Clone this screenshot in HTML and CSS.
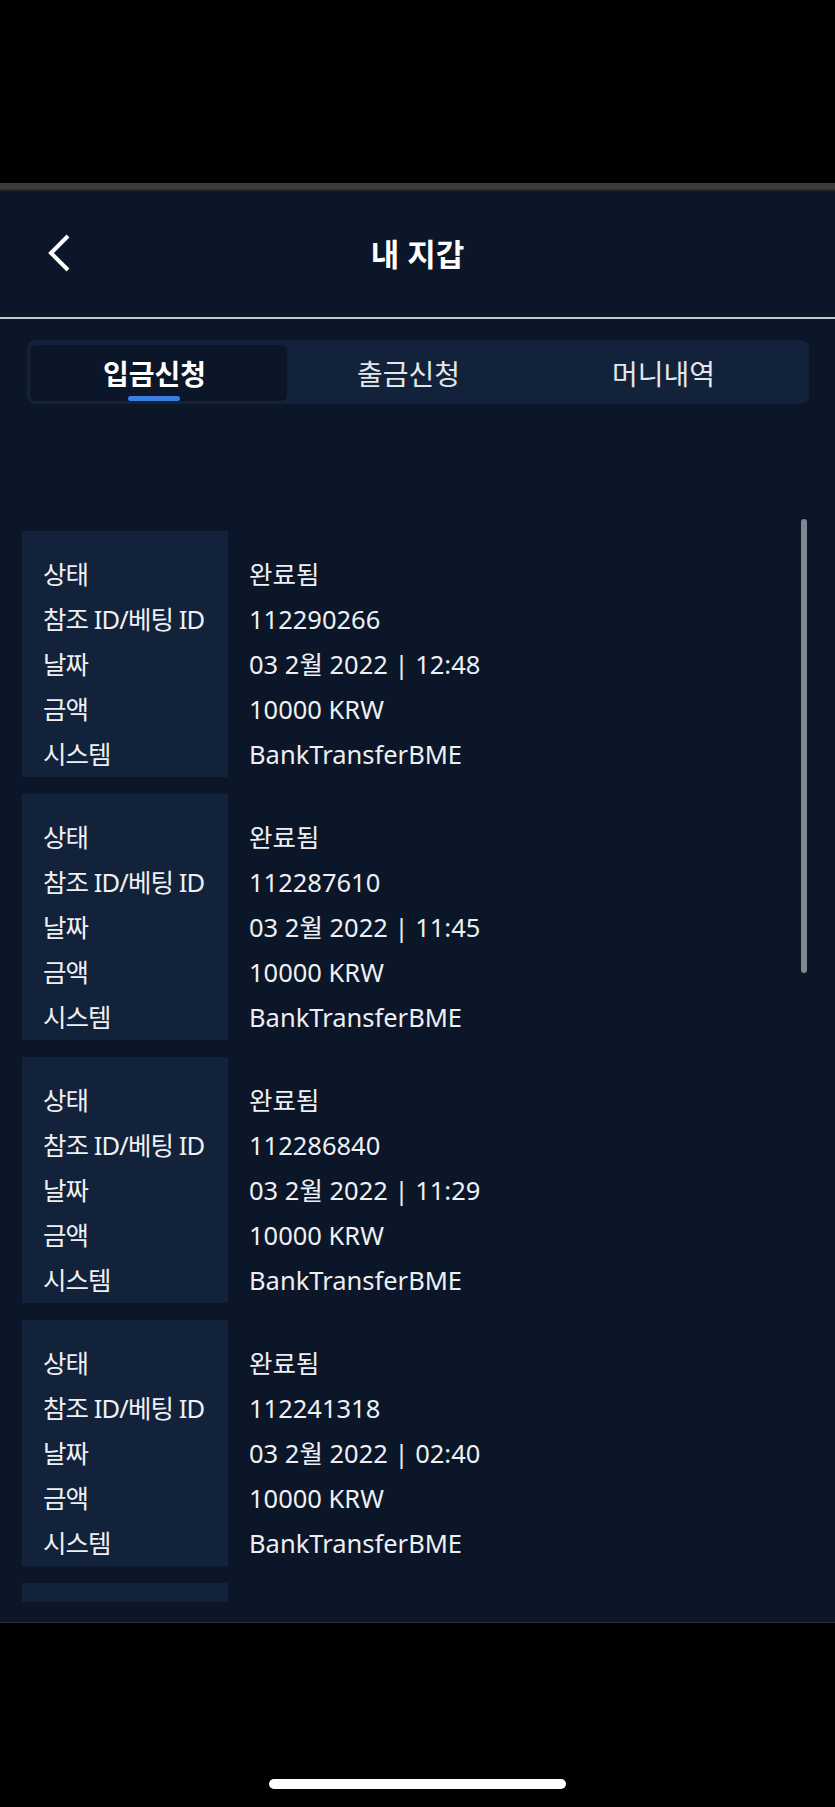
FILE: index.html
```html
<!DOCTYPE html>
<html lang="ko">
  <head>
    <meta charset="UTF-8" />
    <meta name="viewport" content="width=device-width, initial-scale=1.0" />
    <title>내 지갑</title>
    <link rel="stylesheet" href="styles.css">
  </head>
  <body>
    <div class="status-bar"></div>
    <div class="sheet-edge"></div>
    <div class="app">
      <header class="top-bar">
        <button class="back-btn">
          <svg width="26" height="40" viewBox="0 0 26 40">
            <path d="M22 3 L5 20 L22 37" fill="none" stroke="#ffffff" stroke-width="4" />
          </svg>
        </button>
        <h1 class="title">내 지갑</h1>
      </header>

      <nav class="tabs">
        <div class="tab active">입금신청</div>
        <div class="tab">출금신청</div>
        <div class="tab">머니내역</div>
      </nav>

      <div class="list-wrap">
        <div class="card">
          <div class="keys">
            <div>상태</div><div>참조 ID/베팅 ID</div><div>날짜</div><div>금액</div><div>시스템</div>
          </div>
          <div class="vals">
            <div>완료됨</div><div>112290266</div><div>03 2월 2022 | 12:48</div><div>10000 KRW</div><div>BankTransferBME</div>
          </div>
        </div>
        <div class="card">
          <div class="keys">
            <div>상태</div><div>참조 ID/베팅 ID</div><div>날짜</div><div>금액</div><div>시스템</div>
          </div>
          <div class="vals">
            <div>완료됨</div><div>112287610</div><div>03 2월 2022 | 11:45</div><div>10000 KRW</div><div>BankTransferBME</div>
          </div>
        </div>
        <div class="card">
          <div class="keys">
            <div>상태</div><div>참조 ID/베팅 ID</div><div>날짜</div><div>금액</div><div>시스템</div>
          </div>
          <div class="vals">
            <div>완료됨</div><div>112286840</div><div>03 2월 2022 | 11:29</div><div>10000 KRW</div><div>BankTransferBME</div>
          </div>
        </div>
        <div class="card">
          <div class="keys">
            <div>상태</div><div>참조 ID/베팅 ID</div><div>날짜</div><div>금액</div><div>시스템</div>
          </div>
          <div class="vals">
            <div>완료됨</div><div>112241318</div><div>03 2월 2022 | 02:40</div><div>10000 KRW</div><div>BankTransferBME</div>
          </div>
        </div>
        <!-- next card, only its top edge peeks in -->
        <div class="card">
          <div class="keys"></div>
          <div class="vals"></div>
        </div>
        <div class="scrollbar"></div>
      </div>
    </div>
    <div class="home-area">
      <div class="home-indicator"></div>
    </div>
  </body>
</html>
```

FILE: styles.css
```css
* {
  margin: 0;
  padding: 0;
  box-sizing: border-box;
}
body {
  width: 835px;
  height: 1807px;
  overflow: hidden;
  background: #000000;
  color: #eef0f3;
  font-family: "Noto Sans", "Noto Sans CJK KR", sans-serif;
}
.status-bar {
  height: 183px;
  background: #000000;
}
.sheet-edge {
  height: 8px;
  background: #3b3c3f;
  border-bottom: 2px solid #2a2b2e;
}
.app {
  height: 1432px;
  background: #0b1628;
  border-bottom: 1px solid #2c323b;
  padding-bottom: 20px;
}
.top-bar {
  height: 128px;
  border-bottom: 2px solid #c1c7cd;
  display: flex;
  align-items: center;
  justify-content: center;
  position: relative;
}
.back-btn {
  position: absolute;
  left: 46px;
  top: 42px;
  background: none;
  border: none;
  display: flex;
}
.title {
  font-size: 31px;
  font-weight: 700;
  color: #ffffff;
  line-height: 1;
}
.tabs {
  margin: 21px 26px 0 27px;
  height: 64px;
  padding: 5px 3px 3px;
  background: #12223a;
  border-radius: 8px;
  display: grid;
  grid-template-columns: repeat(3, 255px);
}
.tab {
  position: relative;
  display: flex;
  align-items: center;
  justify-content: center;
  padding-right: 8px;
  font-size: 28px;
  color: #e4e7ea;
}
.tab.active {
  background: #0b1628;
  border-radius: 6px;
  margin-right: -2px;
  font-weight: 700;
  color: #ffffff;
}
.tab.active::after {
  content: "";
  position: absolute;
  left: calc(50% - 31px);
  bottom: 0;
  width: 52px;
  height: 5px;
  border-radius: 3px;
  background: #3b7fe3;
}
.list-wrap {
  position: relative;
  margin-top: 112px;
  height: 1086px;
  overflow: hidden;
  padding: 15px 0 0 22px;
}
.card {
  display: flex;
  height: 246px;
  margin-bottom: 17px;
  font-size: 25.5px;
  line-height: 45px;
  white-space: nowrap;
}
.keys {
  width: 206px;
  background: #12223a;
  padding: 21px 0 0 21px;
  letter-spacing: -0.9px;
}
.vals {
  padding: 21px 0 0 21px;
}
.scrollbar {
  position: absolute;
  left: 801px;
  top: 3px;
  width: 6px;
  height: 454px;
  border-radius: 3px;
  background: #7f8791;
}
.home-area {
  height: 184px;
  padding-top: 156px;
}
.home-indicator {
  width: 297px;
  height: 10px;
  margin: 0 auto;
  border-radius: 5px;
  background: #ffffff;
}
```
